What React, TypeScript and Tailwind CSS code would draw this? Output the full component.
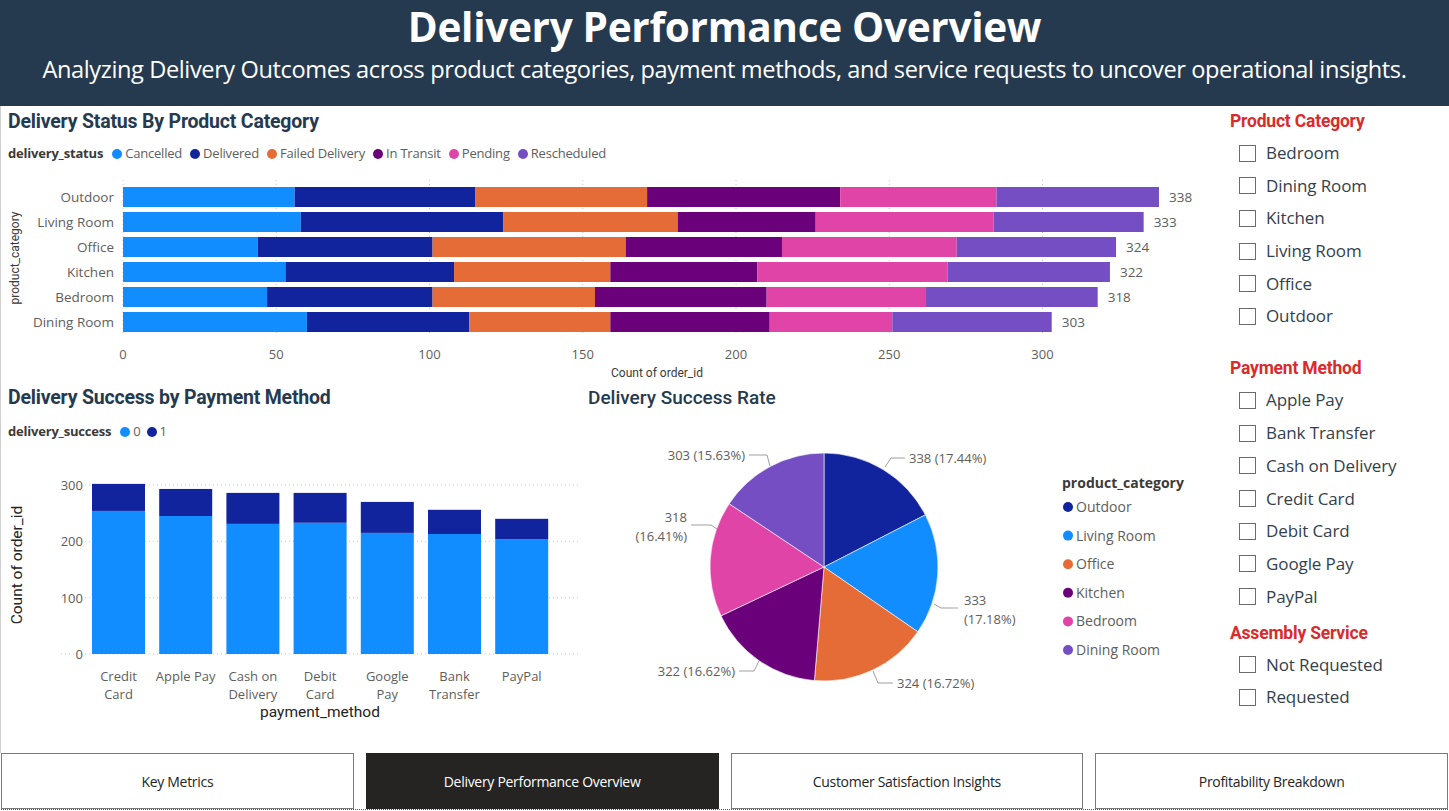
import React from "react";

const STATUS = [
  { name: "Cancelled", color: "#118DFF" },
  { name: "Delivered", color: "#12239E" },
  { name: "Failed Delivery", color: "#E66C37" },
  { name: "In Transit", color: "#6B007B" },
  { name: "Pending", color: "#E044A7" },
  { name: "Rescheduled", color: "#744EC2" },
];

const ROWS = [
  { name: "Outdoor", vals: [56, 59, 56, 63, 51, 53] },
  { name: "Living Room", vals: [58, 66, 57, 45, 58, 49] },
  { name: "Office", vals: [44, 57, 63, 51, 57, 52] },
  { name: "Kitchen", vals: [53, 55, 51, 48, 62, 53] },
  { name: "Bedroom", vals: [47, 54, 53, 56, 52, 56] },
  { name: "Dining Room", vals: [60, 53, 46, 52, 40, 52] },
];

const PAY = [
  { l1: "Credit", l2: "Card", a: 254, b: 48 },
  { l1: "Apple Pay", l2: "", a: 245, b: 48 },
  { l1: "Cash on", l2: "Delivery", a: 231, b: 55 },
  { l1: "Debit", l2: "Card", a: 233, b: 53 },
  { l1: "Google", l2: "Pay", a: 215, b: 55 },
  { l1: "Bank", l2: "Transfer", a: 213, b: 43 },
  { l1: "PayPal", l2: "", a: 204, b: 36 },
];

const PIE = [
  { name: "Outdoor", v: 338, color: "#12239E" },
  { name: "Living Room", v: 333, color: "#118DFF" },
  { name: "Office", v: 324, color: "#E66C37" },
  { name: "Kitchen", v: 322, color: "#6B007B" },
  { name: "Bedroom", v: 318, color: "#E044A7" },
  { name: "Dining Room", v: 303, color: "#744EC2" },
];

const CHART_FONT = "'Open Sans', 'Liberation Sans', sans-serif";
const DIN_FONT = "Roboto, 'Liberation Sans', sans-serif";
const LABEL = "#605E5C";

function StatusChart() {
  const x0 = 122;
  const k = 3.065;
  return (
    <svg width={1195} height={215} className="block">
      {[0, 50, 100, 150, 200, 250, 300].map((t) => (
        <g key={t}>
          <line x1={x0 + t * k} x2={x0 + t * k} y1={10} y2={166} stroke="#C8C8C8" strokeWidth={1} strokeDasharray="1 3" />
          <text x={x0 + t * k} y={189} textAnchor="middle" fontSize={13} fill={LABEL} fontFamily={CHART_FONT}>
            {t}
          </text>
        </g>
      ))}
      {ROWS.map((r, i) => {
        let acc = 0;
        const cy = 27 + i * 25;
        return (
          <g key={r.name}>
            <text x={113} y={cy + 5} textAnchor="end" fontSize={13.5} fill={LABEL} fontFamily={CHART_FONT}>
              {r.name}
            </text>
            {r.vals.map((v, j) => {
              const x = x0 + acc * k;
              acc += v;
              return <rect key={j} x={x} y={cy - 10} width={v * k} height={20} fill={STATUS[j].color} />;
            })}
            <text x={x0 + acc * k + 10} y={cy + 5} fontSize={13.5} fill={LABEL} fontFamily={CHART_FONT}>
              {acc}
            </text>
          </g>
        );
      })}
      <text x={656} y={207} textAnchor="middle" fontSize={12} fill="#3b3a39" fontFamily={DIN_FONT}>
        Count of order_id
      </text>
      <text
        x={0}
        y={0}
        transform="translate(18 88) rotate(-90)"
        textAnchor="middle"
        fontSize={12}
        fill="#3b3a39"
        fontFamily={DIN_FONT}
      >
        product_category
      </text>
    </svg>
  );
}

function PaymentChart() {
  const base = 204;
  const k = 0.5633;
  return (
    <svg width={580} height={272} className="block">
      {[0, 100, 200, 300].map((t) => (
        <g key={t}>
          <line x1={60} x2={578} y1={base - t * k} y2={base - t * k} stroke="#C8C8C8" strokeWidth={1} strokeDasharray="1 3" />
          <text x={82} y={base - t * k + 5} textAnchor="end" fontSize={13} fill={LABEL} fontFamily={CHART_FONT}>
            {t}
          </text>
        </g>
      ))}
      {PAY.map((p, i) => {
        const x = 91 + i * 67.2;
        const cx = x + 26.5;
        return (
          <g key={i}>
            <rect x={x} y={base - p.a * k} width={53} height={p.a * k} fill="#118DFF" />
            <rect x={x} y={base - (p.a + p.b) * k} width={53} height={p.b * k} fill="#12239E" />
            <text x={cx} y={231} textAnchor="middle" fontSize={13} fill={LABEL} fontFamily={CHART_FONT}>
              {p.l1}
            </text>
            {p.l2 && (
              <text x={cx} y={249} textAnchor="middle" fontSize={13} fill={LABEL} fontFamily={CHART_FONT}>
                {p.l2}
              </text>
            )}
          </g>
        );
      })}
      <text x={319} y={267} textAnchor="middle" fontSize={15.5} fill="#252423" fontFamily={DIN_FONT}>
        payment_method
      </text>
      <text
        x={0}
        y={0}
        transform="translate(21 115) rotate(-90)"
        textAnchor="middle"
        fontSize={15.5}
        fill="#252423"
        fontFamily={DIN_FONT}
      >
        Count of order_id
      </text>
    </svg>
  );
}

function PieChart() {
  const cx = 243;
  const cy = 157;
  const r = 114;
  const total = PIE.reduce((s, p) => s + p.v, 0);
  let acc = 0;
  const pt = (f: number) => {
    const a = f * Math.PI * 2;
    return [cx + r * Math.sin(a), cy - r * Math.cos(a)];
  };
  const slices = PIE.map((p) => {
    const f0 = acc / total;
    acc += p.v;
    const f1 = acc / total;
    const [xa, ya] = pt(f0);
    const [xb, yb] = pt(f1);
    const large = f1 - f0 > 0.5 ? 1 : 0;
    return (
      <path
        key={p.name}
        d={`M${cx} ${cy} L${xa} ${ya} A${r} ${r} 0 ${large} 1 ${xb} ${yb} Z`}
        fill={p.color}
        stroke="#fff"
        strokeWidth={0.6}
      />
    );
  });
  const lbl = { fontSize: 13, fill: LABEL, fontFamily: CHART_FONT } as const;
  const lead = { stroke: "#A19F9D", strokeWidth: 1, fill: "none" } as const;
  return (
    <svg width={615} height={335} className="block">
      {slices}
      {/* 338 */}
      <polyline points="304,57 310,48 324,48" {...lead} />
      <text x={328} y={53} {...lbl}>338 (17.44%)</text>
      {/* 303 */}
      <polyline points="189,56 186,45 168,45" {...lead} />
      <text x={164} y={50} textAnchor="end" {...lbl}>303 (15.63%)</text>
      {/* 318 */}
      <polyline points="136,119 130,115 110,115" {...lead} />
      <text x={106} y={112} textAnchor="end" {...lbl}>318</text>
      <text x={106} y={131} textAnchor="end" {...lbl}>(16.41%)</text>
      {/* 333 */}
      <polyline points="353,194 360,198 377,198" {...lead} />
      <text x={383} y={195} {...lbl}>333</text>
      <text x={383} y={214} {...lbl}>(17.18%)</text>
      {/* 322 */}
      <polyline points="178,251 173,261 158,261" {...lead} />
      <text x={154} y={266} textAnchor="end" {...lbl}>322 (16.62%)</text>
      {/* 324 */}
      <polyline points="292,261 297,273 312,273" {...lead} />
      <text x={316} y={278} {...lbl}>324 (16.72%)</text>

      <text x={481} y={78} fontSize={14} fontWeight={700} fill="#3b3a39" fontFamily={CHART_FONT}>
        product_category
      </text>
      {PIE.map((p, i) => (
        <g key={p.name}>
          <circle cx={487} cy={97 + i * 28.6} r={5} fill={p.color} />
          <text x={495} y={102 + i * 28.6} fontSize={14} fill={LABEL} fontFamily={CHART_FONT}>
            {p.name}
          </text>
        </g>
      ))}
    </svg>
  );
}

function Dot({ color }: { color: string }) {
  return <span className="inline-block w-[10px] h-[10px] rounded-full mr-[3px]" style={{ backgroundColor: color }} />;
}

function Slicer({ title, items, className }: { title: string; items: string[]; className?: string }) {
  return (
    <div className={className}>
      <div className="h-[24px] leading-[24px] pl-[35px] text-[17.5px] font-bold text-[#D82C2C] font-['Roboto',sans-serif] tracking-[-0.2px]">
        {title}
      </div>
      <div className="flex flex-col pl-[44px] mt-[10px] gap-[12.7px]">
        {items.map((it) => (
          <div key={it} className="flex items-center h-[20px]">
            <span className="w-[17px] h-[17px] border border-[#6b6b6b] bg-white mr-[10px] shrink-0" />
            <span className="text-[17px] text-[#333F4C] font-['Open_Sans',sans-serif] leading-[20px] tracking-[-0.1px]">{it}</span>
          </div>
        ))}
      </div>
    </div>
  );
}

export default function App() {
  const tabs = ["Key Metrics", "Delivery Performance Overview", "Customer Satisfaction Insights", "Profitability Breakdown"];
  return (
    <div className="w-[1449px] h-[811px] bg-white overflow-hidden relative font-['Open_Sans',sans-serif]">
      <header className="h-[106px] bg-[#253A4F] flex flex-col items-center text-white">
        <h1 className="mt-0 pt-[1px] text-[40.5px] leading-[52px] font-bold font-['Open_Sans',sans-serif] tracking-[-0.3px] whitespace-nowrap">
          Delivery Performance Overview
        </h1>
        <p className="mt-0 text-[23.6px] leading-[32px] font-['Open_Sans',sans-serif] tracking-[-0.4px] whitespace-nowrap">
          Analyzing Delivery Outcomes across product categories, payment methods, and service requests to uncover operational insights.
        </p>
      </header>

      <div className="flex h-[647px] border-l border-[#d0d0d0]">
        <div className="w-[1194px] flex flex-col">
          <section className="h-[279px]">
            <div className="mt-[4px] pl-[7px] h-[24px] leading-[24px] text-[19.5px] font-bold text-[#253A4F] font-['Roboto',sans-serif] tracking-[-0.2px]">
              Delivery Status By Product Category
            </div>
            <div className="mt-[10px] pl-[7px] h-[20px] flex items-center text-[13px] text-[#605E5C] font-['Open_Sans',sans-serif] tracking-[-0.2px]">
              <span className="font-bold text-[#3b3a39] mr-[9px]">delivery_status</span>
              {STATUS.map((s) => (
                <span key={s.name} className="flex items-center mr-[8px]">
                  <Dot color={s.color} />
                  {s.name}
                </span>
              ))}
            </div>
            <div className="mt-[6px]">
              <StatusChart />
            </div>
          </section>

          <section className="flex h-[368px]">
            <div className="w-[580px]">
              <div className="mt-[1px] pl-[7px] h-[24px] leading-[24px] text-[19.5px] font-bold text-[#253A4F] font-['Roboto',sans-serif] tracking-[-0.2px]">
                Delivery Success by Payment Method
              </div>
              <div className="mt-[12px] pl-[7px] h-[20px] flex items-center text-[13px] text-[#605E5C] tracking-[-0.2px]">
                <span className="font-bold text-[#3b3a39] mr-[9px]">delivery_success</span>
                <span className="flex items-center mr-[6px]">
                  <Dot color="#118DFF" />0
                </span>
                <span className="flex items-center">
                  <Dot color="#12239E" />1
                </span>
              </div>
              <div className="mt-[8px]">
                <PaymentChart />
              </div>
            </div>
            <div className="w-[614px]">
              <div className="mt-[1px] pl-[7px] h-[24px] leading-[24px] text-[19px] font-medium text-[#253A4F] font-['Roboto',sans-serif] tracking-[0px]">
                Delivery Success Rate
              </div>
              <div className="mt-[0px]">
                <PieChart />
              </div>
            </div>
          </section>
        </div>

        <aside className="w-[254px] pt-[3px]">
          <Slicer title="Product Category" items={["Bedroom", "Dining Room", "Kitchen", "Living Room", "Office", "Outdoor"]} />
          <Slicer
            className="mt-[30px]"
            title="Payment Method"
            items={["Apple Pay", "Bank Transfer", "Cash on Delivery", "Credit Card", "Debit Card", "Google Pay", "PayPal"]}
          />
          <Slicer className="mt-[14px]" title="Assembly Service" items={["Not Requested", "Requested"]} />
        </aside>
      </div>

      <footer className="flex gap-[12px] px-[1px] h-[56px]">
        {tabs.map((t, i) => (
          <div
            key={t}
            className={
              i === 1
                ? "w-[353px] h-full flex items-center justify-center bg-[#252423] text-white text-[14px] border border-[#252423] tracking-[-0.3px]"
                : "w-[353px] h-full flex items-center justify-center bg-white text-[#252423] text-[14px] border border-[#7a7a7a] tracking-[-0.3px]"
            }
          >
            {t}
          </div>
        ))}
      </footer>
      <div className="h-[2px] border-t border-dotted border-[#555] mx-[1px]" />
    </div>
  );
}
